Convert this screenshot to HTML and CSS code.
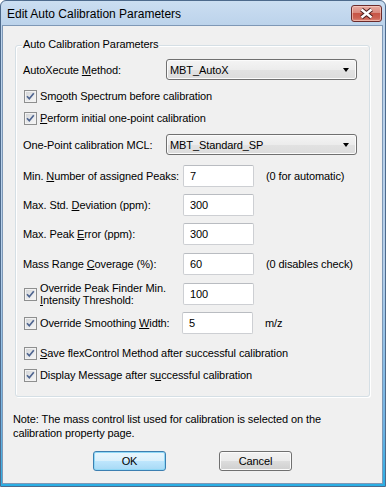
FILE: index.html
```html
<!DOCTYPE html>
<html>
<head>
<meta charset="utf-8">
<title>Edit Auto Calibration Parameters</title>
<link rel="stylesheet" href="styles.css">
</head>
<body>
<div class="window">
  <div class="titlebar">
    <span class="title">Edit Auto Calibration Parameters</span>
    <span class="close">
      <svg width="29" height="15" viewBox="0 0 29 15">
        <path d="M9.5 3.5 L19.5 11.5 M19.5 3.5 L9.5 11.5" stroke="#4a1c1c" stroke-width="4.4" fill="none"/>
        <path d="M9.5 3.5 L19.5 11.5 M19.5 3.5 L9.5 11.5" stroke="#ffffff" stroke-width="2.4" fill="none"/>
      </svg>
    </span>
  </div>
  <div class="client">
    <div class="group">
      <div class="group-title">Auto Calibration Parameters</div>

      <div class="row r-select mt7">
        <span class="label lw-sel">AutoXecute <u>M</u>ethod:</span>
        <span class="select"><span class="sel-text">MBT_AutoX</span><span class="arrow"></span></span>
      </div>

      <div class="row r-check mt7">
        <span class="cb"><svg width="11" height="11" viewBox="0 0 11 11"><path d="M2 5.2 L4.3 7.8 L8.8 2.2" fill="none" stroke="#4f6590" stroke-width="1.7"/></svg></span>
        <span class="cb-label">Sm<u>o</u>oth Spectrum before calibration</span>
      </div>

      <div class="row r-check mt6">
        <span class="cb"><svg width="11" height="11" viewBox="0 0 11 11"><path d="M2 5.2 L4.3 7.8 L8.8 2.2" fill="none" stroke="#4f6590" stroke-width="1.7"/></svg></span>
        <span class="cb-label"><u>P</u>erform initial one-point calibration</span>
      </div>

      <div class="row r-select mt7">
        <span class="label lw-sel">One-Point calibration MCL:</span>
        <span class="select"><span class="sel-text">MBT_Standard_SP</span><span class="arrow"></span></span>
      </div>

      <div class="row r-input mt9">
        <span class="label lw-in">Min. <u>N</u>umber of assigned Peaks:</span>
        <span class="input">7</span>
        <span class="hint">(0 for automatic)</span>
      </div>

      <div class="row r-input mt7">
        <span class="label lw-in">Max. Std. <u>D</u>eviation (ppm):</span>
        <span class="input">300</span>
      </div>

      <div class="row r-input mt7">
        <span class="label lw-in">Max. Peak <u>E</u>rror (ppm):</span>
        <span class="input">300</span>
      </div>

      <div class="row r-input mt8">
        <span class="label lw-in">Mass Range <u>C</u>overage (%):</span>
        <span class="input">60</span>
        <span class="hint">(0 disables check)</span>
      </div>

      <div class="row r-input mt8">
        <span class="cb"><svg width="11" height="11" viewBox="0 0 11 11"><path d="M2 5.2 L4.3 7.8 L8.8 2.2" fill="none" stroke="#4f6590" stroke-width="1.7"/></svg></span>
        <span class="cb-label two-line lw-cb">Override Peak Finder Min.<br><u>I</u>ntensity Threshold:</span>
        <span class="input">100</span>
      </div>

      <div class="row r-input mt7">
        <span class="cb"><svg width="11" height="11" viewBox="0 0 11 11"><path d="M2 5.2 L4.3 7.8 L8.8 2.2" fill="none" stroke="#4f6590" stroke-width="1.7"/></svg></span>
        <span class="cb-label lw-cb2">Override Smoothing <u>W</u>idth:</span>
        <span class="input">5</span>
        <span class="hint">m/z</span>
      </div>

      <div class="row r-check mt11">
        <span class="cb"><svg width="11" height="11" viewBox="0 0 11 11"><path d="M2 5.2 L4.3 7.8 L8.8 2.2" fill="none" stroke="#4f6590" stroke-width="1.7"/></svg></span>
        <span class="cb-label"><u>S</u>ave flexControl Method after successful calibration</span>
      </div>

      <div class="row r-check mt6">
        <span class="cb"><svg width="11" height="11" viewBox="0 0 11 11"><path d="M2 5.2 L4.3 7.8 L8.8 2.2" fill="none" stroke="#4f6590" stroke-width="1.7"/></svg></span>
        <span class="cb-label">Display Message after s<u>u</u>ccessful calibration</span>
      </div>
    </div>

    <p class="note">Note: The mass control list used for calibration is selected on the<br>calibration property page.</p>

    <div class="buttons">
      <span class="btn btn-default">OK</span>
      <span class="btn">Cancel</span>
    </div>
  </div>
</div>
</body>
</html>
```

FILE: styles.css
```css
html, body {
  margin: 0;
  padding: 0;
  background: #ffffff;
}

body {
  font-family: "Liberation Sans", Arial, sans-serif;
  font-size: 11px;
  letter-spacing: -0.1px;
  color: #000;
}

.window {
  width: 386px;
  height: 487px;
  box-sizing: border-box;
  border: 1px solid #4d6a8c;
  border-radius: 6px 6px 0 0;
  background: linear-gradient(to bottom, #cbdef1 0px, #bcd3eb 24px, #b5cfea 55%, #6fb2e2 88%, #2aaee4 100%);
  display: flex;
  flex-direction: column;
}

.titlebar {
  height: 24px;
  flex: 0 0 24px;
  display: flex;
  align-items: center;
  justify-content: space-between;
  padding: 0 3px 0 6px;
}

.title {
  font-size: 12px;
  letter-spacing: 0;
  color: #000;
  padding-top: 1px;
}

.close {
  width: 31px;
  height: 17px;
  box-sizing: border-box;
  margin-top: 5px;
  align-self: flex-start;
  margin-top: 4px;
  border: 1px solid #6b2b2b;
  border-radius: 3px;
  background: linear-gradient(to bottom, #e8aba2 0%, #d98a7e 45%, #c75546 50%, #cc6253 80%, #dc8a7c 100%);
  box-shadow: inset 0 0 0 1px rgba(255, 220, 210, 0.55);
  display: flex;
  align-items: center;
  justify-content: center;
}

.close svg {
  display: block;
}

.client {
  flex: 1;
  margin: 0 2px 2px 1px;
  border: 1px solid #7e98b6;
  background: #f0f0f0;
  display: flex;
  flex-direction: column;
}

.group {
  margin: 19px 12px 0 12px;
  border: 1px solid #d5dfe5;
  border-radius: 3px;
  box-shadow: 1px 1px 0 #ffffff, inset 1px 1px 0 #ffffff;
  padding: 0 7px 13px 7px;
  display: flex;
  flex-direction: column;
}

.group-title {
  align-self: flex-start;
  margin: -9px 0 0 -1px;
  padding: 0 1px;
  height: 14px;
  line-height: 14px;
  background: #f0f0f0;
}

.row {
  display: flex;
  align-items: center;
}

.r-select { height: 23px; }
.r-check { height: 16px; }
.r-input { height: 22px; }

.mt6 { margin-top: 6px; }
.mt7 { margin-top: 7px; }
.mt8 { margin-top: 8px; }
.mt9 { margin-top: 9px; }
.mt11 { margin-top: 11px; }

.label {
  white-space: nowrap;
}

.lw-sel { flex: 0 0 143px; }
.lw-in { flex: 0 0 160px; }
.lw-cb { flex: 0 0 143px; }
.lw-cb2 { flex: 0 0 142px; }

.select {
  width: 191px;
  height: 21px;
  box-sizing: border-box;
  border: 1px solid #707070;
  border-radius: 3px;
  background: linear-gradient(to bottom, #f4f4f4 0%, #ececec 50%, #e2e2e2 51%, #dcdcdc 100%);
  box-shadow: inset 0 0 0 1px #fbfbfb;
  display: flex;
  align-items: center;
  padding-left: 3px;
}

.sel-text {
  flex: 1;
}

.arrow {
  width: 0;
  height: 0;
  border-top: 4px solid #000;
  border-left: 3.5px solid transparent;
  border-right: 3.5px solid transparent;
  margin-right: 7px;
}

.cb {
  flex: 0 0 13px;
  width: 13px;
  height: 13px;
  box-sizing: border-box;
  margin-left: 1px;
  border: 1px solid #8e8f8f;
  background: linear-gradient(135deg, #cfd1d4 0%, #e9eaeb 55%, #f7f7f7 100%);
  box-shadow: inset 0 0 0 1px #f2f2f2;
  display: flex;
  align-items: center;
  justify-content: center;
}

.cb svg {
  display: block;
}

.cb-label {
  margin-left: 3px;
  white-space: nowrap;
}

.two-line {
  line-height: 12px;
}

.input {
  width: 71px;
  height: 22px;
  box-sizing: border-box;
  flex: 0 0 71px;
  border: 1px solid #cdcfd3;
  border-top-color: #b9bcc1;
  border-radius: 2px;
  background: #ffffff;
  padding-left: 6px;
  display: flex;
  align-items: center;
}

.hint {
  margin-left: 12px;
  white-space: nowrap;
}

.note {
  margin: 15px 0 0 0;
  padding-left: 10px;
  line-height: 14px;
}

.buttons {
  margin-top: 11px;
  display: flex;
  justify-content: center;
  gap: 53px;
}

.btn {
  width: 73px;
  height: 20px;
  box-sizing: border-box;
  border: 1px solid #707070;
  border-radius: 3px;
  background: linear-gradient(to bottom, #f2f2f2 0%, #ebebeb 50%, #dddddd 51%, #cfcfcf 100%);
  box-shadow: inset 0 0 0 1px #fbfbfb;
  display: flex;
  align-items: center;
  justify-content: center;
}

.btn-default {
  border-color: #3c7fb1;
  background: linear-gradient(to bottom, #eaf6fd 0%, #d9f0fc 50%, #bee6fd 51%, #a7d9f5 100%);
  box-shadow: inset 0 0 0 1px #8fd8f6;
}
```
